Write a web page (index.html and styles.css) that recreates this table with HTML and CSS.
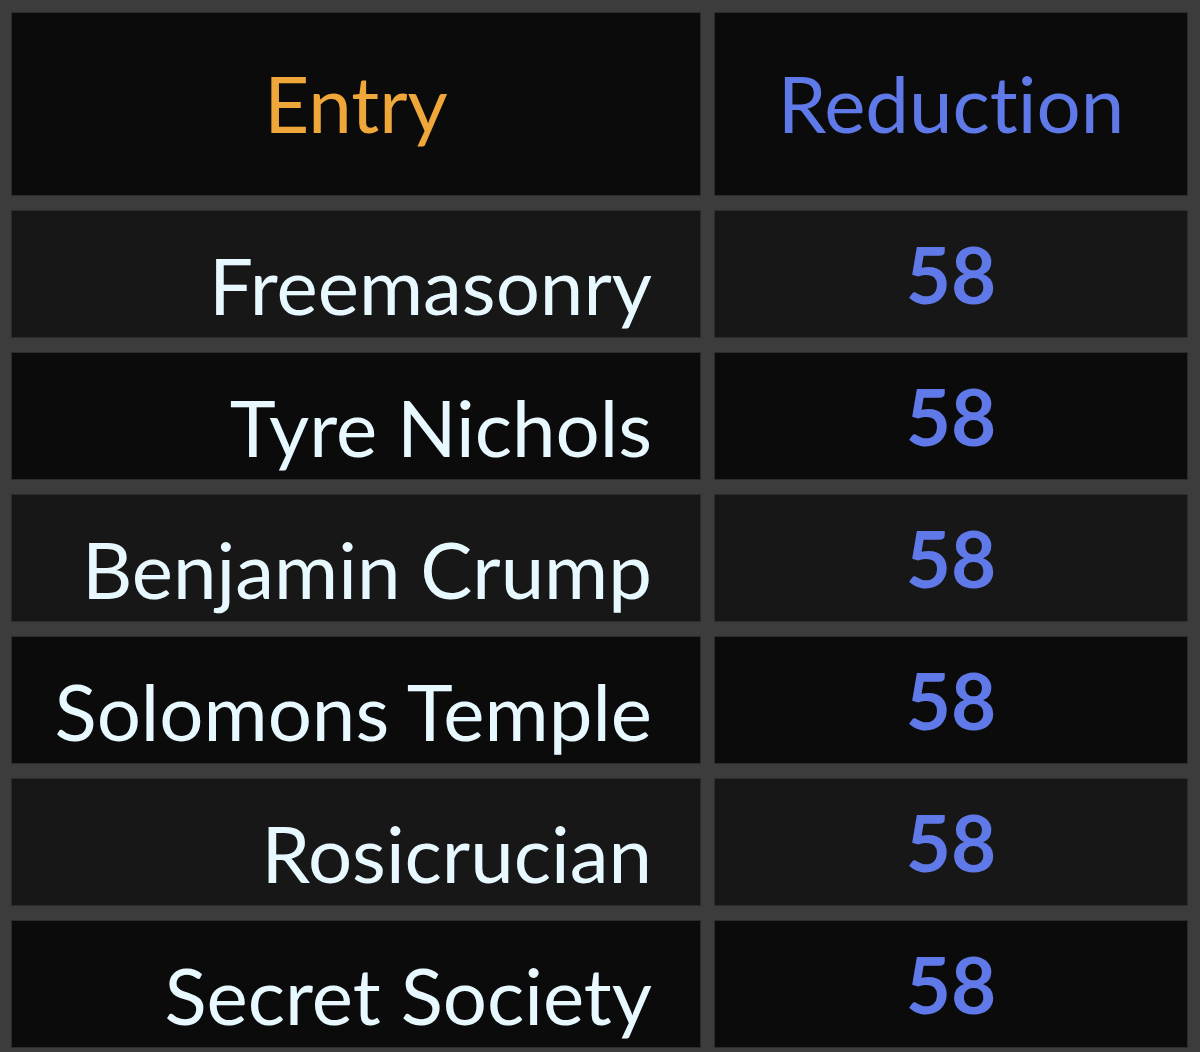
FILE: index.html
```html
<!DOCTYPE html>
<html>
<head>
<meta charset="utf-8">
<link rel="stylesheet" href="styles.css">
</head>
<body>
<div class="table">
  <div class="cell head entry">Entry</div>
  <div class="cell head reduction">Reduction</div>

  <div class="cell name odd">Freemasonry</div>
  <div class="cell num odd">58</div>

  <div class="cell name even">Tyre Nichols</div>
  <div class="cell num even">58</div>

  <div class="cell name odd">Benjamin Crump</div>
  <div class="cell num odd">58</div>

  <div class="cell name even">Solomons Temple</div>
  <div class="cell num even">58</div>

  <div class="cell name odd">Rosicrucian</div>
  <div class="cell num odd">58</div>

  <div class="cell name even">Secret Society</div>
  <div class="cell num even">58</div>
</div>
</body>
</html>
```

FILE: styles.css
```css
html, body {
  margin: 0;
  padding: 0;
  background: #3c3c3c;
  height: 100%;
}
body {
  font-family: Lato, "Liberation Sans", sans-serif;
  font-variant-ligatures: none;
}
.table {
  display: grid;
  grid-template-columns: 690px 474px;
  grid-template-rows: 184px repeat(6, 128px);
  column-gap: 13px;
  row-gap: 14px;
  padding: 12px 12px 0 11px;
}
.cell {
  box-sizing: border-box;
  border: 1px solid #2c2c2c;
  display: flex;
  font-size: 78px;
  line-height: 1;
}
.odd { background: #171717; }
.even, .head { background: #0b0b0b; }
.head {
  align-items: center;
  justify-content: center;
  padding-bottom: 2px;
}
.entry { color: #efa73a; }
.reduction { color: #6079e8; }
.name {
  color: #e8f8ff;
  justify-content: flex-end;
  align-items: flex-end;
  padding-right: 48px;
  padding-bottom: 13px;
}
.num {
  color: #6079e8;
  font-weight: 700;
  justify-content: center;
  align-items: center;
}
```
